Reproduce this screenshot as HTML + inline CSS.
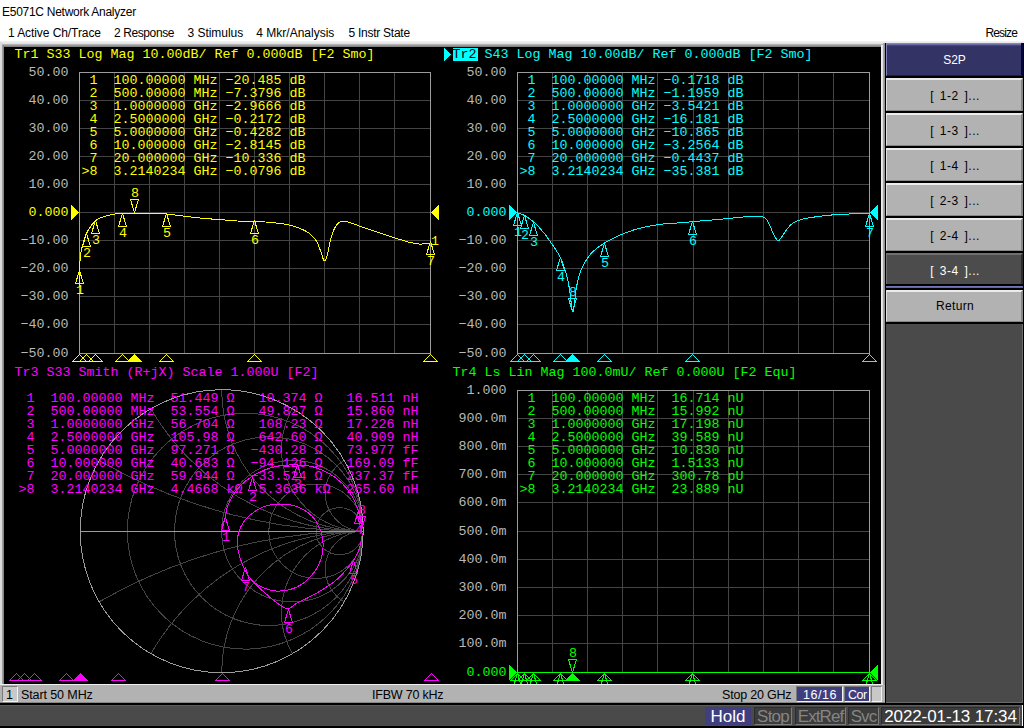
<!DOCTYPE html><html><head><meta charset="utf-8"><title>E5071C Network Analyzer</title><style>

html,body{margin:0;padding:0;font-family:"Liberation Sans",sans-serif}
body{width:1024px;height:728px;position:relative;overflow:hidden;background:#fff;font-family:"Liberation Sans",sans-serif;}
.a{position:absolute}
.m{position:absolute;font-family:"Liberation Mono",monospace;font-size:13.333px;line-height:13px;white-space:pre;margin:0}
.s{position:absolute;font-family:"Liberation Sans",sans-serif;white-space:pre;color:#000}
.btn{position:absolute;left:886px;width:137px;height:33px;background:#b2b2b2;border:1px solid;border-color:#ececec #868686 #868686 #e0e0e0;border-top-width:2px;border-right-width:2px;box-sizing:border-box;text-align:center;font-size:12px;line-height:33px;color:#000;letter-spacing:0.5px;word-spacing:2px;white-space:pre;padding-left:2px}
.sb{position:absolute;top:707px;height:18px;box-sizing:border-box;border:1px solid;border-color:#2c2c2c #7c7c7c #7c7c7c #2c2c2c;background:#3c3c3c;color:#858585;font-size:17px;line-height:18px;text-align:center;white-space:pre}

</style></head><body>
<div class="s" style="left:2px;top:5px;font-size:12px;line-height:14px;letter-spacing:-0.27px" id="ttl">E5071C Network Analyzer</div>
<div class="s" id="mn0" style="left:8px;top:26px;font-size:12px;line-height:14px;letter-spacing:-0.08px">1 Active Ch/Trace</div>
<div class="s" id="mn1" style="left:114px;top:26px;font-size:12px;line-height:14px;letter-spacing:-0.4px">2 Response</div>
<div class="s" id="mn2" style="left:187.5px;top:26px;font-size:12px;line-height:14px;letter-spacing:-0.03px">3 Stimulus</div>
<div class="s" id="mn3" style="left:256.3px;top:26px;font-size:12px;line-height:14px;letter-spacing:0px">4 Mkr/Analysis</div>
<div class="s" id="mn4" style="left:348.4px;top:26px;font-size:12px;line-height:14px;letter-spacing:-0.25px">5 Instr State</div>
<div class="s" id="mn5" style="left:985.4px;top:26px;font-size:12px;line-height:14px;letter-spacing:-0.85px">Resize</div>
<div class="a" style="left:0;top:41px;width:1024px;height:4px;background:linear-gradient(#f4f4f4,#d6d6d6)"></div>
<div class="a" style="left:0;top:44px;width:885px;height:3px;background:linear-gradient(#c4c4c4,#8e8e8e 60%,#7a7a7a)"></div>
<div class="a" style="left:0;top:42px;width:2px;height:662px;background:#dcdcdc"></div>
<div class="a" style="left:2px;top:45px;width:2px;height:640px;background:linear-gradient(90deg,#a8a8a8,#7c7c7c)"></div>
<div class="a" style="left:4px;top:47px;width:877px;height:637px;background:#000"></div>
<div class="a" style="left:881px;top:45px;width:2px;height:640px;background:linear-gradient(90deg,#f4f4f4,#dcdcdc)"></div>
<div class="a" style="left:883px;top:43px;width:2px;height:661px;background:linear-gradient(90deg,#b0b0b0,#8c8c8c)"></div>
<div class="a" style="left:885px;top:43px;width:139px;height:662px;background:#000"></div>
<div class="a" style="left:886px;top:43px;width:137px;height:660px;background:#4a4a4a;box-sizing:border-box;border-right:1px solid #6a6a6a;border-bottom:1px solid #6a6a6a"></div>
<div class="a" style="left:886px;top:43px;width:137px;height:33px;background:linear-gradient(#9494cc,#5c5c96 2px,#333366 3px);border-left:1px solid #8484bc;border-bottom:1px solid #1c1c44;border-right:2px solid #06063c;box-sizing:border-box;color:#fff;text-align:center;font-size:12px;line-height:34px;padding-left:1px">S2P</div>
<div class="a" style="left:886px;top:76px;width:137px;height:2px;background:#000"></div>
<div class="btn" style="top:78px;">[ 1-2 ]...</div>
<div class="a" style="left:886px;top:111px;width:137px;height:2px;background:#000"></div>
<div class="btn" style="top:113px;">[ 1-3 ]...</div>
<div class="a" style="left:886px;top:146px;width:137px;height:2px;background:#000"></div>
<div class="btn" style="top:148px;">[ 1-4 ]...</div>
<div class="a" style="left:886px;top:181px;width:137px;height:2px;background:#000"></div>
<div class="btn" style="top:183px;">[ 2-3 ]...</div>
<div class="a" style="left:886px;top:216px;width:137px;height:2px;background:#000"></div>
<div class="btn" style="top:218px;">[ 2-4 ]...</div>
<div class="a" style="left:886px;top:251px;width:137px;height:2px;background:#000"></div>
<div class="btn" style="top:253px;background:#4c4c4c;color:#fff;border-color:#707070 #2c2c2c #2c2c2c #707070;">[ 3-4 ]...</div>
<div class="a" style="left:886px;top:284px;width:137px;height:6px;background:#000"></div>
<div class="a" style="left:886px;top:286px;width:137px;height:2px;background:linear-gradient(#7c7cc0,#5c5ca0)"></div>
<div class="btn" style="top:290px;height:32px;line-height:29px;letter-spacing:0.3px">Return</div>
<div class="a" style="left:886px;top:322px;width:137px;height:2px;background:#000"></div>
<div class="a" style="left:0;top:684px;width:883px;height:1px;background:#f0f0f0"></div>
<div class="a" style="left:0;top:685px;width:885px;height:18px;background:#b2b2b2;box-sizing:border-box;border-bottom:1px solid #868686"></div>
<div class="a" style="left:2px;top:686px;width:16px;height:16px;box-sizing:border-box;border:1px solid;border-color:#7a7a7a #f4f4f4 #f4f4f4 #7a7a7a;background:#c8c8c8"></div>
<div class="s" id="st0" style="left:6px;top:688px;font-size:12.5px;line-height:14px;letter-spacing:0px">1</div>
<div class="s" id="st1" style="left:21px;top:688px;font-size:12.5px;line-height:14px;letter-spacing:-0.1px">Start 50 MHz</div>
<div class="s" id="st2" style="left:372px;top:688px;font-size:12.5px;line-height:14px;letter-spacing:-0.2px">IFBW 70 kHz</div>
<div class="s" id="st3" style="left:722px;top:688px;font-size:12.5px;line-height:14px;letter-spacing:-0.2px">Stop 20 GHz</div>
<div class="a" style="left:796px;top:686px;width:47px;height:16px;box-sizing:border-box;border:1px solid;border-color:#7a7a7a #f4f4f4 #f4f4f4 #7a7a7a;background:#3f3f7f"></div>
<div class="s" id="st4" style="left:803px;top:688px;font-size:12.5px;line-height:14px;letter-spacing:0.55px;color:#fff">16/16</div>
<div class="a" style="left:844px;top:686px;width:26px;height:16px;box-sizing:border-box;border:1px solid;border-color:#7a7a7a #f4f4f4 #f4f4f4 #7a7a7a;background:#3f3f7f"></div>
<div class="s" id="st5" style="left:848px;top:688px;font-size:12.5px;line-height:14px;letter-spacing:-0.5px;color:#fff">Cor</div>
<div class="a" style="left:871px;top:686px;width:11px;height:16px;box-sizing:border-box;border:1px solid;border-color:#7a7a7a #f4f4f4 #f4f4f4 #7a7a7a;background:#c8c8c8"></div>
<div class="a" style="left:0;top:703px;width:1024px;height:2px;background:#000"></div>
<div class="a" style="left:0;top:705px;width:1022px;height:21px;background:#4a4a4a;box-sizing:border-box;border-top:1px solid #5c5c5c"></div>
<div class="a" style="left:0;top:726px;width:1024px;height:2px;background:#000"></div>
<div class="a" style="left:1023px;top:43px;width:1px;height:685px;background:#000"></div>
<div class="sb" style="left:705px;width:46px;background:#3f3f7f;border-color:#3f3f7f;color:#fff">Hold</div>
<div class="sb" style="left:754px;width:38px;letter-spacing:-0.8px">Stop</div>
<div class="sb" style="left:795px;width:51px;letter-spacing:-0.9px">ExtRef</div>
<div class="sb" style="left:848px;width:31px;letter-spacing:-0.9px">Svc</div>
<div class="sb" style="left:881px;width:139px;color:#fff;letter-spacing:-0.1px">2022-01-13 17:34</div>
<div class="a" style="left:4px;top:47px;width:877px;height:637px;overflow:hidden">
<div class="a" style="left:-4px;top:-47px;width:1024px;height:728px">
<svg class="a" style="left:0;top:0" width="1024" height="728" viewBox="0 0 1024 728" shape-rendering="crispEdges" stroke-linejoin="bevel"><path d="M114.5,72V353M79,100.5H430M149.5,72V353M79,128.5H430M184.5,72V353M79,156.5H430M219.5,72V353M79,184.5H430M254.5,72V353M79,212.5H430M289.5,72V353M79,240.5H430M324.5,72V353M79,268.5H430M359.5,72V353M79,296.5H430M394.5,72V353M79,324.5H430" stroke="#444444" fill="none"/>
<rect x="79.5" y="72.5" width="351" height="281" stroke="#9c9c9c" fill="none"/>
<path d="M71,204.5V220.5L79,212.5Z" fill="#ffff00"/>
<path d="M439,204.5V220.5L431,212.5Z" fill="#ffff00"/>
<path d="M79.5,354.5L72.5,361.5H86.5Z" stroke="#ffff00" fill="none"/>
<path d="M86.5,354.5L79.5,361.5H93.5Z" stroke="#ffff00" fill="none"/>
<path d="M95.5,354.5L88.5,361.5H102.5Z" stroke="#ffff00" fill="none"/>
<path d="M122.5,354.5L115.5,361.5H129.5Z" stroke="#ffff00" fill="none"/>
<path d="M134.5,354.5L127.5,361.5H141.5Z" stroke="#ffff00" fill="#ffff00"/>
<path d="M166.5,354.5L159.5,361.5H173.5Z" stroke="#ffff00" fill="none"/>
<path d="M254.5,354.5L247.5,361.5H261.5Z" stroke="#ffff00" fill="none"/>
<path d="M430.5,354.5L423.5,361.5H437.5Z" stroke="#ffff00" fill="none"/>
<path d="M552.5,72V353M517,100.5H869M587.5,72V353M517,128.5H869M622.5,72V353M517,156.5H869M657.5,72V353M517,184.5H869M693.5,72V353M517,212.5H869M728.5,72V353M517,240.5H869M763.5,72V353M517,268.5H869M798.5,72V353M517,296.5H869M833.5,72V353M517,324.5H869" stroke="#444444" fill="none"/>
<rect x="517.5" y="72.5" width="352" height="281" stroke="#9c9c9c" fill="none"/>
<rect x="453" y="48" width="25" height="13" fill="#00ffff"/>
<path d="M444,48V61L451,54.5Z" fill="#00ffff"/>
<path d="M509,204.5V220.5L517,212.5Z" fill="#00ffff"/>
<path d="M878,204.5V220.5L870,212.5Z" fill="#00ffff"/>
<path d="M517.5,354.5L510.5,361.5H524.5Z" stroke="#00ffff" fill="none"/>
<path d="M524.5,354.5L517.5,361.5H531.5Z" stroke="#00ffff" fill="none"/>
<path d="M533.5,354.5L526.5,361.5H540.5Z" stroke="#00ffff" fill="none"/>
<path d="M560.5,354.5L553.5,361.5H567.5Z" stroke="#00ffff" fill="none"/>
<path d="M572.5,354.5L565.5,361.5H579.5Z" stroke="#00ffff" fill="#00ffff"/>
<path d="M604.5,354.5L597.5,361.5H611.5Z" stroke="#00ffff" fill="none"/>
<path d="M692.5,354.5L685.5,361.5H699.5Z" stroke="#00ffff" fill="none"/>
<path d="M869.5,354.5L862.5,361.5H876.5Z" stroke="#00ffff" fill="none"/>
<path d="M552.5,390V672M517,418.5H869M587.5,390V672M517,446.5H869M622.5,390V672M517,474.5H869M657.5,390V672M517,502.5H869M693.5,390V672M517,531.5H869M728.5,390V672M517,559.5H869M763.5,390V672M517,587.5H869M798.5,390V672M517,615.5H869M833.5,390V672M517,643.5H869" stroke="#444444" fill="none"/>
<rect x="517.5" y="390.5" width="352" height="282" stroke="#9c9c9c" fill="none"/>
<path d="M509,664.5V680.5L517,672.5Z" fill="#00ff00"/>
<path d="M878,664.5V680.5L870,672.5Z" fill="#00ff00"/>
<path d="M517.5,673.5L510.5,680.5H524.5Z" stroke="#00ff00" fill="none"/>
<path d="M524.5,673.5L517.5,680.5H531.5Z" stroke="#00ff00" fill="none"/>
<path d="M533.5,673.5L526.5,680.5H540.5Z" stroke="#00ff00" fill="none"/>
<path d="M560.5,673.5L553.5,680.5H567.5Z" stroke="#00ff00" fill="none"/>
<path d="M572.5,673.5L565.5,680.5H579.5Z" stroke="#00ff00" fill="#00ff00"/>
<path d="M604.5,673.5L597.5,680.5H611.5Z" stroke="#00ff00" fill="none"/>
<path d="M692.5,673.5L685.5,680.5H699.5Z" stroke="#00ff00" fill="none"/>
<path d="M869.5,673.5L862.5,680.5H876.5Z" stroke="#00ff00" fill="none"/>
<path d="M79.6,286.0C79.6,283.7 79.6,276.9 79.7,272.2C79.8,267.5 79.9,261.9 80.2,258.0C80.5,254.1 80.8,252.4 81.7,248.7C82.6,244.9 84.2,239.1 85.6,235.5C87.0,231.9 88.6,229.4 90.3,226.9C92.0,224.4 94.0,222.2 95.8,220.6C97.6,219.0 99.1,218.4 101.3,217.5C103.5,216.6 106.7,215.8 109.0,215.2C111.3,214.6 113.0,214.3 115.3,214.0C117.6,213.7 119.8,213.6 123.0,213.4C126.2,213.2 130.4,213.1 134.8,213.1C139.2,213.1 144.3,213.2 149.7,213.3C155.0,213.5 161.4,213.6 166.9,214.0C172.4,214.4 176.5,215.3 182.5,216.0C188.5,216.7 196.6,217.7 202.8,218.3C209.1,218.9 214.3,219.2 220.0,219.6C225.7,220.0 231.5,220.7 237.2,221.0C242.9,221.3 248.3,221.1 254.4,221.4C260.5,221.7 267.6,222.0 273.7,222.7C279.8,223.4 286.2,224.3 290.9,225.4C295.5,226.5 298.4,227.7 301.6,229.1C304.8,230.5 307.7,231.9 310.2,234.0C312.7,236.1 314.9,238.5 316.7,241.6C318.5,244.7 319.9,249.4 321.0,252.3C322.1,255.2 322.5,257.4 323.1,258.8C323.7,260.2 324.1,260.9 324.6,260.9C325.1,260.9 325.7,260.6 326.3,258.8C326.9,257.0 327.8,253.4 328.5,250.2C329.2,247.0 329.7,242.8 330.6,239.4C331.5,236.0 332.8,232.2 333.9,229.7C335.0,227.2 336.0,225.7 337.1,224.4C338.2,223.1 338.9,222.3 340.3,221.8C341.7,221.3 343.9,221.2 345.7,221.4C347.5,221.6 348.4,222.0 351.1,222.9C353.8,223.8 356.8,225.2 361.8,227.0C366.8,228.8 375.4,231.5 381.1,233.4C386.8,235.3 391.5,236.8 396.2,238.3C400.9,239.8 405.2,241.2 409.1,242.2C413.0,243.2 416.3,243.9 419.8,244.1C423.3,244.2 428.3,243.3 430.0,243.1" stroke="#ffff00" fill="none"/>
<path d="M79.5,270.5L75.5,283.5H83.5Z" stroke="#ffff00" fill="none"/>
<path d="M86.5,233.5L82.5,246.5H90.5Z" stroke="#ffff00" fill="none"/>
<path d="M95.5,220.5L91.5,233.5H99.5Z" stroke="#ffff00" fill="none"/>
<path d="M122.5,213.5L118.5,226.5H126.5Z" stroke="#ffff00" fill="none"/>
<path d="M166.5,213.5L162.5,226.5H170.5Z" stroke="#ffff00" fill="none"/>
<path d="M254.5,220.5L250.5,233.5H258.5Z" stroke="#ffff00" fill="none"/>
<path d="M430.5,241.5L426.5,254.5H434.5Z" stroke="#ffff00" fill="none"/>
<path d="M134.5,212.5L130.5,199.5H138.5Z" stroke="#ffff00" fill="none"/>
<path d="M517.5,212.9C518.7,213.3 521.8,213.9 524.6,215.5C527.4,217.1 531.2,219.7 534.5,222.7C537.8,225.7 541.2,229.5 544.3,233.4C547.4,237.3 550.5,241.9 553.2,245.9C555.9,249.9 558.3,253.2 560.4,257.5C562.5,261.8 564.2,266.7 565.7,271.8C567.2,276.9 568.4,282.8 569.3,287.9C570.2,292.9 570.5,298.1 571.1,302.1C571.7,306.1 572.3,312.0 572.9,312.0C573.5,312.0 574.0,306.1 574.6,302.1C575.2,298.1 575.6,292.3 576.4,287.9C577.1,283.4 577.9,279.3 579.1,275.4C580.3,271.5 581.7,268.2 583.6,264.6C585.5,261.0 587.7,257.2 590.7,253.9C593.7,250.6 597.8,247.5 601.4,245.0C605.0,242.5 607.9,240.8 612.1,238.8C616.3,236.7 621.6,234.3 626.4,232.5C631.2,230.7 635.3,229.3 640.7,228.0C646.1,226.7 653.2,225.3 658.6,224.5C664.0,223.7 667.4,223.8 673.0,223.3C678.6,222.8 684.9,222.3 692.5,221.7C700.1,221.0 710.7,220.2 718.9,219.4C727.1,218.6 736.1,217.6 741.8,217.1C747.5,216.6 750.0,216.3 753.3,216.2C756.5,216.1 759.2,216.0 761.3,216.4C763.4,216.8 764.6,217.4 765.9,218.7C767.2,220.0 768.1,222.1 769.3,224.4C770.4,226.7 771.7,230.2 772.8,232.5C773.9,234.8 774.9,236.8 775.8,238.2C776.7,239.6 777.3,241.0 778.1,241.0C778.9,241.0 779.6,239.8 780.8,238.2C782.0,236.6 783.9,233.4 785.4,231.3C786.9,229.2 788.5,227.1 790.0,225.6C791.5,224.1 792.7,223.1 794.6,222.1C796.5,221.1 798.1,220.3 801.5,219.4C804.9,218.5 809.9,217.7 815.2,216.9C820.6,216.1 827.5,215.3 833.6,214.8C839.7,214.3 846.0,214.1 852.0,213.9C858.0,213.7 866.6,213.7 869.5,213.6" stroke="#00ffff" fill="none"/>
<path d="M517.5,212.5L513.5,225.5H521.5Z" stroke="#00ffff" fill="none"/>
<path d="M524.5,215.5L520.5,228.5H528.5Z" stroke="#00ffff" fill="none"/>
<path d="M533.5,222.5L529.5,235.5H537.5Z" stroke="#00ffff" fill="none"/>
<path d="M560.5,257.5L556.5,270.5H564.5Z" stroke="#00ffff" fill="none"/>
<path d="M604.5,243.5L600.5,256.5H608.5Z" stroke="#00ffff" fill="none"/>
<path d="M692.5,221.5L688.5,234.5H696.5Z" stroke="#00ffff" fill="none"/>
<path d="M869.5,213.5L865.5,226.5H873.5Z" stroke="#00ffff" fill="none"/>
<path d="M572.5,311.5L568.5,298.5H576.5Z" stroke="#00ffff" fill="none"/>
<path d="M517,672.5H870" stroke="#00ff00" fill="none"/>
<path d="M517.5,673.5L513.5,686.5H521.5Z" stroke="#00ff00" fill="none"/>
<path d="M524.5,673.5L520.5,686.5H528.5Z" stroke="#00ff00" fill="none"/>
<path d="M533.5,673.5L529.5,686.5H537.5Z" stroke="#00ff00" fill="none"/>
<path d="M560.5,673.5L556.5,686.5H564.5Z" stroke="#00ff00" fill="none"/>
<path d="M572.5,672.5L568.5,659.5H576.5Z" stroke="#00ff00" fill="none"/>
<path d="M604.5,673.5L600.5,686.5H608.5Z" stroke="#00ff00" fill="none"/>
<path d="M692.5,673.5L688.5,686.5H696.5Z" stroke="#00ff00" fill="none"/>
<path d="M869.5,673.5L865.5,686.5H873.5Z" stroke="#00ff00" fill="none"/>
<clipPath id="sc"><circle cx="221.7" cy="531.2" r="141.5"/></clipPath>
<g clip-path="url(#sc)" stroke="#444444" fill="none"><circle cx="245.28" cy="531.2" r="117.92"/><circle cx="268.87" cy="531.2" r="94.33"/><circle cx="292.45" cy="531.2" r="70.75"/><circle cx="316.03" cy="531.2" r="47.17"/><circle cx="339.62" cy="531.2" r="23.58"/><circle cx="363.20" cy="3.11" r="528.09"/><circle cx="363.20" cy="1059.29" r="528.09"/><circle cx="363.20" cy="286.11" r="245.09"/><circle cx="363.20" cy="776.29" r="245.09"/><circle cx="363.20" cy="389.70" r="141.50"/><circle cx="363.20" cy="672.70" r="141.50"/><circle cx="363.20" cy="449.50" r="81.70"/><circle cx="363.20" cy="612.90" r="81.70"/><circle cx="363.20" cy="493.29" r="37.91"/><circle cx="363.20" cy="569.11" r="37.91"/></g>
<circle cx="221.7" cy="531.2" r="141.5" stroke="#9c9c9c" fill="none"/>
<path d="M80.2,531.5H363.2" stroke="#9c9c9c" fill="none"/>
<path d="M222.0,525.0C222.5,524.0 224.1,521.6 224.9,518.7C225.8,515.8 225.8,511.5 227.1,507.7C228.4,503.9 230.2,499.5 232.6,495.7C235.0,491.9 238.3,487.8 241.4,484.7C244.5,481.6 247.6,479.4 251.3,477.0C255.0,474.6 258.8,472.2 263.4,470.4C268.0,468.6 273.2,466.9 278.7,466.0C284.2,465.1 290.4,464.7 296.3,464.9C302.2,465.1 308.4,465.6 313.9,467.1C319.4,468.6 324.5,470.9 329.3,473.7C334.1,476.4 338.6,479.8 342.5,483.6C346.4,487.5 349.8,492.4 352.4,496.8C355.0,501.2 356.5,505.9 357.9,509.9C359.2,513.9 359.9,517.6 360.5,520.9C361.1,524.2 361.6,526.8 361.8,529.7C362.0,532.6 362.3,535.2 361.8,538.5C361.3,541.8 360.4,545.8 359.0,549.5C357.6,553.2 355.9,556.8 353.5,560.5C351.1,564.2 347.7,568.1 344.7,571.5C341.7,574.9 339.1,577.8 335.4,580.8C331.6,583.8 326.6,587.1 322.2,589.8C317.8,592.5 313.4,594.9 309.0,597.2C304.6,599.5 299.4,601.9 295.8,603.8C292.2,605.7 290.9,609.1 287.6,608.8C284.3,608.5 279.6,604.7 276.0,602.2C272.4,599.7 269.2,596.6 266.2,594.0C263.2,591.4 260.4,588.9 257.9,586.5C255.4,584.1 253.2,582.2 251.3,579.9C249.4,577.6 247.8,574.8 246.4,572.5C245.0,570.2 244.3,568.9 243.1,565.9C241.9,562.9 240.0,558.2 239.0,554.4C238.0,550.6 237.3,546.8 237.3,542.9C237.3,539.0 237.8,535.0 239.0,531.3C240.2,527.6 242.1,523.9 244.7,520.6C247.3,517.3 251.0,514.0 254.6,511.5C258.2,509.0 262.3,507.0 266.2,505.8C270.1,504.6 273.6,504.2 277.7,504.1C281.8,504.0 286.8,504.1 290.9,504.9C295.0,505.7 298.8,507.2 302.4,509.1C306.0,511.0 309.6,513.6 312.3,516.5C315.1,519.4 317.2,522.8 318.9,526.4C320.6,530.0 321.8,534.3 322.5,537.9C323.2,541.5 323.2,544.5 323.0,547.8C322.8,551.1 322.4,554.4 321.4,557.7C320.4,561.0 319.1,564.3 317.2,567.6C315.3,570.9 312.5,574.6 309.8,577.5C307.1,580.4 304.2,582.9 300.8,584.9C297.4,586.9 293.3,588.8 289.2,589.8C285.1,590.8 280.1,591.3 276.0,591.0C271.9,590.7 267.9,589.5 264.5,588.2C261.1,586.9 258.0,585.1 255.4,583.2C252.8,581.3 250.5,579.3 248.8,576.6C247.1,573.9 246.0,568.7 245.4,567.1" stroke="#ff00ff" fill="none"/>
<path d="M225.5,517.5L221.5,530.5H229.5Z" stroke="#ff00ff" fill="none"/>
<path d="M252.5,477.5L248.5,490.5H256.5Z" stroke="#ff00ff" fill="none"/>
<path d="M297.5,464.5L293.5,477.5H301.5Z" stroke="#ff00ff" fill="none"/>
<path d="M358.5,510.5L354.5,523.5H362.5Z" stroke="#ff00ff" fill="none"/>
<path d="M353.5,560.5L349.5,573.5H357.5Z" stroke="#ff00ff" fill="none"/>
<path d="M288.5,609.5L284.5,622.5H292.5Z" stroke="#ff00ff" fill="none"/>
<path d="M245.5,567.5L241.5,580.5H249.5Z" stroke="#ff00ff" fill="none"/>
<path d="M361.5,529.5L357.5,516.5H365.5Z" stroke="#ff00ff" fill="none"/>
<path d="M16.5,673.5L9.5,680.5H23.5Z" stroke="#ff00ff" fill="none"/>
<path d="M24.5,673.5L17.5,680.5H31.5Z" stroke="#ff00ff" fill="none"/>
<path d="M34.5,673.5L27.5,680.5H41.5Z" stroke="#ff00ff" fill="none"/>
<path d="M66.5,673.5L59.5,680.5H73.5Z" stroke="#ff00ff" fill="none"/>
<path d="M80.5,673.5L73.5,680.5H87.5Z" stroke="#ff00ff" fill="#ff00ff"/>
<path d="M118.5,673.5L111.5,680.5H125.5Z" stroke="#ff00ff" fill="none"/>
<path d="M222.5,673.5L215.5,680.5H229.5Z" stroke="#ff00ff" fill="none"/>
<path d="M431.5,673.5L424.5,680.5H438.5Z" stroke="#ff00ff" fill="none"/></svg>
<pre class="m" style="left:14.5px;top:48px;color:#ffff00;">Tr1 S33 Log Mag 10.00dB/ Ref 0.000dB [F2 Smo]</pre>
<pre class="m" style="left:28.5px;top:66px;color:#b8b8b8;">50.00</pre>
<pre class="m" style="left:28.5px;top:94px;color:#b8b8b8;">40.00</pre>
<pre class="m" style="left:28.5px;top:122px;color:#b8b8b8;">30.00</pre>
<pre class="m" style="left:28.5px;top:150px;color:#b8b8b8;">20.00</pre>
<pre class="m" style="left:28.5px;top:178px;color:#b8b8b8;">10.00</pre>
<pre class="m" style="left:28.5px;top:206px;color:#ffff00;">0.000</pre>
<pre class="m" style="left:20.5px;top:234px;color:#b8b8b8;">−10.00</pre>
<pre class="m" style="left:20.5px;top:262px;color:#b8b8b8;">−20.00</pre>
<pre class="m" style="left:20.5px;top:290px;color:#b8b8b8;">−30.00</pre>
<pre class="m" style="left:20.5px;top:318px;color:#b8b8b8;">−40.00</pre>
<pre class="m" style="left:20.5px;top:347px;color:#b8b8b8;">−50.00</pre>
<pre class="m" style="left:452.5px;top:48px;color:#000;">Tr2</pre>
<pre class="m" style="left:476.5px;top:48px;color:#00ffff;"> S43 Log Mag 10.00dB/ Ref 0.000dB [F2 Smo]</pre>
<pre class="m" style="left:466.5px;top:66px;color:#b8b8b8;">50.00</pre>
<pre class="m" style="left:466.5px;top:94px;color:#b8b8b8;">40.00</pre>
<pre class="m" style="left:466.5px;top:122px;color:#b8b8b8;">30.00</pre>
<pre class="m" style="left:466.5px;top:150px;color:#b8b8b8;">20.00</pre>
<pre class="m" style="left:466.5px;top:178px;color:#b8b8b8;">10.00</pre>
<pre class="m" style="left:466.5px;top:206px;color:#00ffff;">0.000</pre>
<pre class="m" style="left:458.5px;top:234px;color:#b8b8b8;">−10.00</pre>
<pre class="m" style="left:458.5px;top:262px;color:#b8b8b8;">−20.00</pre>
<pre class="m" style="left:458.5px;top:290px;color:#b8b8b8;">−30.00</pre>
<pre class="m" style="left:458.5px;top:318px;color:#b8b8b8;">−40.00</pre>
<pre class="m" style="left:458.5px;top:347px;color:#b8b8b8;">−50.00</pre>
<pre class="m" style="left:452.5px;top:366px;color:#00ff00;">Tr4 Ls Lin Mag 100.0mU/ Ref 0.000U [F2 Equ]</pre>
<pre class="m" style="left:466.5px;top:384px;color:#b8b8b8;">1.000</pre>
<pre class="m" style="left:458.5px;top:412px;color:#b8b8b8;">900.0m</pre>
<pre class="m" style="left:458.5px;top:440px;color:#b8b8b8;">800.0m</pre>
<pre class="m" style="left:458.5px;top:468px;color:#b8b8b8;">700.0m</pre>
<pre class="m" style="left:458.5px;top:496px;color:#b8b8b8;">600.0m</pre>
<pre class="m" style="left:458.5px;top:525px;color:#b8b8b8;">500.0m</pre>
<pre class="m" style="left:458.5px;top:553px;color:#b8b8b8;">400.0m</pre>
<pre class="m" style="left:458.5px;top:581px;color:#b8b8b8;">300.0m</pre>
<pre class="m" style="left:458.5px;top:609px;color:#b8b8b8;">200.0m</pre>
<pre class="m" style="left:458.5px;top:637px;color:#b8b8b8;">100.0m</pre>
<pre class="m" style="left:466.5px;top:666px;color:#00ff00;">0.000</pre>
<pre class="m" style="left:81.5px;top:74px;color:#ffff00;"> 1  100.00000 MHz −20.485 dB
 2  500.00000 MHz −7.3796 dB
 3  1.0000000 GHz −2.9666 dB
 4  2.5000000 GHz −0.2172 dB
 5  5.0000000 GHz −0.4282 dB
 6  10.000000 GHz −2.8145 dB
 7  20.000000 GHz −10.336 dB
&gt;8  3.2140234 GHz −0.0796 dB</pre>
<pre class="m" style="left:519.5px;top:74px;color:#00ffff;"> 1  100.00000 MHz −0.1718 dB
 2  500.00000 MHz −1.1959 dB
 3  1.0000000 GHz −3.5421 dB
 4  2.5000000 GHz −16.181 dB
 5  5.0000000 GHz −10.865 dB
 6  10.000000 GHz −3.2564 dB
 7  20.000000 GHz −0.4437 dB
&gt;8  3.2140234 GHz −35.381 dB</pre>
<pre class="m" style="left:519.5px;top:392px;color:#00ff00;"> 1  100.00000 MHz  16.714 nU
 2  500.00000 MHz  15.992 nU
 3  1.0000000 GHz  17.198 nU
 4  2.5000000 GHz  39.589 nU
 5  5.0000000 GHz  10.830 nU
 6  10.000000 GHz  1.5133 nU
 7  20.000000 GHz  300.78 pU
&gt;8  3.2140234 GHz  23.889 nU</pre>
<pre class="m" style="left:18.5px;top:392px;color:#ff00ff;"> 1  100.00000 MHz  51.449 Ω   10.374 Ω   16.511 nH
 2  500.00000 MHz  53.554 Ω   49.827 Ω   15.860 nH
 3  1.0000000 GHz  56.704 Ω   108.23 Ω   17.226 nH
 4  2.5000000 GHz  105.98 Ω   642.60 Ω   40.909 nH
 5  5.0000000 GHz  97.271 Ω  −430.28 Ω   73.977 fF
 6  10.000000 GHz  40.683 Ω  −94.126 Ω   169.09 fF
 7  20.000000 GHz  59.944 Ω  −33.524 Ω   237.37 fF
&gt;8  3.2140234 GHz  4.4668 kΩ  5.3636 kΩ  265.60 nH</pre>
<pre class="m" style="left:14.5px;top:366px;color:#ff00ff;">Tr3 S33 Smith (R+jX) Scale 1.000U [F2]</pre>
<pre class="m" style="left:76.0px;top:283.5px;color:#ffff00;">1</pre>
<pre class="m" style="left:83.0px;top:246.5px;color:#ffff00;">2</pre>
<pre class="m" style="left:92.0px;top:233.5px;color:#ffff00;">3</pre>
<pre class="m" style="left:119.0px;top:226.5px;color:#ffff00;">4</pre>
<pre class="m" style="left:163.0px;top:226.5px;color:#ffff00;">5</pre>
<pre class="m" style="left:251.0px;top:233.5px;color:#ffff00;">6</pre>
<pre class="m" style="left:427.0px;top:254.5px;color:#ffff00;">7</pre>
<pre class="m" style="left:131.0px;top:186.5px;color:#ffff00;">8</pre>
<pre class="m" style="left:431px;top:235px;color:#ffff00;">1</pre>
<pre class="m" style="left:514.0px;top:225.5px;color:#00ffff;">1</pre>
<pre class="m" style="left:521.0px;top:228.5px;color:#00ffff;">2</pre>
<pre class="m" style="left:530.0px;top:235.5px;color:#00ffff;">3</pre>
<pre class="m" style="left:557.0px;top:270.5px;color:#00ffff;">4</pre>
<pre class="m" style="left:601.0px;top:256.5px;color:#00ffff;">5</pre>
<pre class="m" style="left:689.0px;top:234.5px;color:#00ffff;">6</pre>
<pre class="m" style="left:866.0px;top:226.5px;color:#00ffff;">7</pre>
<pre class="m" style="left:569.0px;top:285.5px;color:#00ffff;">8</pre>
<pre class="m" style="left:569.0px;top:646.5px;color:#00ff00;">8</pre>
<pre class="m" style="left:222.0px;top:530.5px;color:#ff00ff;">1</pre>
<pre class="m" style="left:249.0px;top:490.5px;color:#ff00ff;">2</pre>
<pre class="m" style="left:294.0px;top:477.5px;color:#ff00ff;">3</pre>
<pre class="m" style="left:355.0px;top:523.5px;color:#ff00ff;">4</pre>
<pre class="m" style="left:350.0px;top:573.5px;color:#ff00ff;">5</pre>
<pre class="m" style="left:285.0px;top:622.5px;color:#ff00ff;">6</pre>
<pre class="m" style="left:242.0px;top:580.5px;color:#ff00ff;">7</pre>
<pre class="m" style="left:358.0px;top:503.5px;color:#ff00ff;">8</pre>
</div></div>
</body></html>
